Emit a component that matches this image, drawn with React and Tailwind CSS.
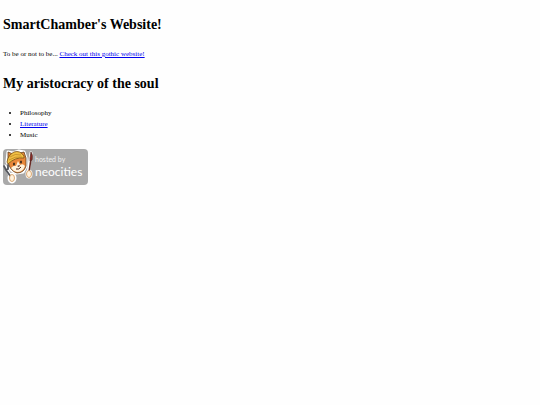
function HostedBadge() {
  return (
    <svg viewBox="0 0 85 36" className="block h-9 w-[85px]" role="img" aria-label="hosted by neocities">
      <rect width="85" height="36" rx="4" fill="#a9a9a9" />
      <g stroke="#fff" strokeWidth="3" strokeLinejoin="round" strokeLinecap="round" fill="#fff">
        <path d="M5 3 10 4 16 2 21 3 23 9 23 17 20 23 13 24 8 21 4 13Z" />
        <path d="M2 17 9 30M28 4 25 25" />
        <ellipse cx="9" cy="29" rx="3" ry="4" />
        <ellipse cx="26" cy="25" rx="2" ry="3" />
      </g>
      <path d="M1 17 3 21 8 28M5 16 5 20 3 21" fill="none" stroke="#54565c" strokeWidth="1.8" strokeLinecap="round" />
      <path d="M5 13 5 3 10 5 17 4 21 3 23 9 23 17Q21 24 14 24 7 22 5 13Z" fill="#e8873a" stroke="#60401f" strokeWidth=".8" />
      <path d="M8 19Q11 16 13 17L15 12 17 16Q20 14 22 17 20 23 14 23 10 22 8 19Z" fill="#fff2dc" />
      <path d="M4 13Q5 6 11 3 17 1 21 7L21 9Q12 8 5 15Z" fill="#f0c044" stroke="#785018" strokeWidth=".8" />
      <path d="M7 8Q12 4 18 6M6 11Q12 7 19 8" fill="none" stroke="#b98022" strokeWidth=".7" />
      <ellipse cx="11" cy="15" rx=".9" ry="1.5" fill="#292019" />
      <ellipse cx="18" cy="13" rx=".9" ry="1.5" fill="#292019" />
      <path d="M14 17 17 16 16 18Z" fill="#4d2118" />
      <path d="M13 20Q16 21 18 18" fill="none" stroke="#4d2118" strokeWidth="1" />
      <path d="M28 10 26 23" stroke="#672b25" strokeWidth="1.6" />
      <path d="M27 9 28 3Q30 6 29 11L27 12Z" fill="#952d27" stroke="#4d2523" strokeWidth=".7" />
      <ellipse cx="9" cy="29" rx="2.5" ry="3.5" fill="#fff1dd" stroke="#ce9356" strokeWidth=".8" />
      <ellipse cx="26" cy="25" rx="2.5" ry="3.5" fill="#fff1dd" stroke="#ce9356" strokeWidth=".8" />
      <text x="32" y="13" fill="#f2f2f2" className="font-['Lato',sans-serif] text-[7px]">hosted by</text>
      <text x="32" y="27" fill="#fff" className="font-['Lato',sans-serif] text-[12px]">neocities</text>
    </svg>
  );
}

export default function App() {
  return (
    <main className="min-h-screen bg-[#fefefe] px-[3px] pt-[13px] font-['Liberation_Serif',serif] text-[7px] leading-[11px] text-black">
      <h1 className="text-[14px] font-bold leading-6">SmartChamber's Website!</h1>
      <p className="mt-3">
        To be or not to be...{' '}
        <a href="#gothic" className="text-[#0000ee] underline">Check out this gothic website!</a>
      </p>
      <h1 className="mt-3 text-[14px] font-bold leading-6">My aristocracy of the soul</h1>
      <ul className="mt-3 list-disc pl-[17px]">
        <li>Philosophy</li>
        <li><a href="#literature" className="text-[#0000ee] underline">Literature</a></li>
        <li>Music</li>
      </ul>
      <a href="#neocities" className="mt-2 inline-block">
        <HostedBadge />
      </a>
    </main>
  );
}
